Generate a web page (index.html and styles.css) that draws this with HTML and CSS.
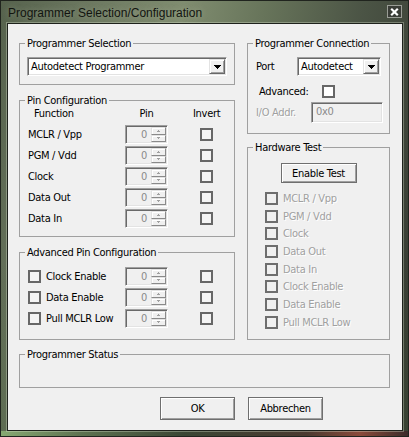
FILE: index.html
```html
<!DOCTYPE html>
<html>
<head>
<meta charset="utf-8">
<title>Programmer Selection/Configuration</title>
<link rel="stylesheet" href="styles.css">
</head>
<body>
<div class="window">
  <div class="titlebar">
    <span class="title">Programmer Selection/Configuration</span>
    <span class="close"><svg width="9" height="8" viewBox="0 0 9 8"><path d="M1.2 0.8L7.8 7.2M7.8 0.8L1.2 7.2" stroke="#fff" stroke-width="2.2"/></svg></span>
  </div>
  <div class="client">
    <div class="columns">
      <div class="col col-left">
        <fieldset class="group g-sel">
          <legend>Programmer Selection</legend>
          <div class="gbody">
            <div class="combo combo-prog">
              <span class="combo-text">Autodetect Programmer</span>
              <span class="combo-btn"><svg width="7" height="4" viewBox="0 0 7 4"><path d="M0 0h7v1h-1v1h-1v1h-1v1h-1v-1h-1v-1h-1v-1h-1z" fill="#000"/></svg></span>
            </div>
          </div>
        </fieldset>

        <fieldset class="group g-pins">
          <legend>Pin Configuration</legend>
          <div class="gbody">
            <div class="pin-head">
              <span class="h-func">Function</span>
              <span class="h-pin">Pin</span>
              <span class="h-inv">Invert</span>
            </div>
            <div class="pin-rows">
              <div class="pin-row">
                <span class="pin-label">MCLR / Vpp</span>
                <div class="spin"><span class="spin-val">0</span><span class="spin-btns"><span class="spin-b"><svg width="3" height="2" viewBox="0 0 3 2"><path d="M1 0h1v1h1v1h-3v-1h1z" fill="#a0a0a0"/></svg></span><span class="spin-b"><svg width="3" height="2" viewBox="0 0 3 2"><path d="M0 0h3v1h-1v1h-1v-1h-1z" fill="#a0a0a0"/></svg></span></span></div>
                <span class="chk chk-inv"></span>
              </div>
              <div class="pin-row">
                <span class="pin-label">PGM / Vdd</span>
                <div class="spin"><span class="spin-val">0</span><span class="spin-btns"><span class="spin-b"><svg width="3" height="2" viewBox="0 0 3 2"><path d="M1 0h1v1h1v1h-3v-1h1z" fill="#a0a0a0"/></svg></span><span class="spin-b"><svg width="3" height="2" viewBox="0 0 3 2"><path d="M0 0h3v1h-1v1h-1v-1h-1z" fill="#a0a0a0"/></svg></span></span></div>
                <span class="chk chk-inv"></span>
              </div>
              <div class="pin-row">
                <span class="pin-label">Clock</span>
                <div class="spin"><span class="spin-val">0</span><span class="spin-btns"><span class="spin-b"><svg width="3" height="2" viewBox="0 0 3 2"><path d="M1 0h1v1h1v1h-3v-1h1z" fill="#a0a0a0"/></svg></span><span class="spin-b"><svg width="3" height="2" viewBox="0 0 3 2"><path d="M0 0h3v1h-1v1h-1v-1h-1z" fill="#a0a0a0"/></svg></span></span></div>
                <span class="chk chk-inv"></span>
              </div>
              <div class="pin-row">
                <span class="pin-label">Data Out</span>
                <div class="spin"><span class="spin-val">0</span><span class="spin-btns"><span class="spin-b"><svg width="3" height="2" viewBox="0 0 3 2"><path d="M1 0h1v1h1v1h-3v-1h1z" fill="#a0a0a0"/></svg></span><span class="spin-b"><svg width="3" height="2" viewBox="0 0 3 2"><path d="M0 0h3v1h-1v1h-1v-1h-1z" fill="#a0a0a0"/></svg></span></span></div>
                <span class="chk chk-inv"></span>
              </div>
              <div class="pin-row">
                <span class="pin-label">Data In</span>
                <div class="spin"><span class="spin-val">0</span><span class="spin-btns"><span class="spin-b"><svg width="3" height="2" viewBox="0 0 3 2"><path d="M1 0h1v1h1v1h-3v-1h1z" fill="#a0a0a0"/></svg></span><span class="spin-b"><svg width="3" height="2" viewBox="0 0 3 2"><path d="M0 0h3v1h-1v1h-1v-1h-1z" fill="#a0a0a0"/></svg></span></span></div>
                <span class="chk chk-inv"></span>
              </div>
            </div>
          </div>
        </fieldset>

        <fieldset class="group g-adv">
          <legend>Advanced Pin Configuration</legend>
          <div class="gbody">
            <div class="adv-rows">
              <div class="pin-row">
                <span class="pin-label adv-label"><span class="chk"></span><span>Clock Enable</span></span>
                <div class="spin"><span class="spin-val">0</span><span class="spin-btns"><span class="spin-b"><svg width="3" height="2" viewBox="0 0 3 2"><path d="M1 0h1v1h1v1h-3v-1h1z" fill="#a0a0a0"/></svg></span><span class="spin-b"><svg width="3" height="2" viewBox="0 0 3 2"><path d="M0 0h3v1h-1v1h-1v-1h-1z" fill="#a0a0a0"/></svg></span></span></div>
                <span class="chk chk-inv"></span>
              </div>
              <div class="pin-row">
                <span class="pin-label adv-label"><span class="chk"></span><span>Data Enable</span></span>
                <div class="spin"><span class="spin-val">0</span><span class="spin-btns"><span class="spin-b"><svg width="3" height="2" viewBox="0 0 3 2"><path d="M1 0h1v1h1v1h-3v-1h1z" fill="#a0a0a0"/></svg></span><span class="spin-b"><svg width="3" height="2" viewBox="0 0 3 2"><path d="M0 0h3v1h-1v1h-1v-1h-1z" fill="#a0a0a0"/></svg></span></span></div>
                <span class="chk chk-inv"></span>
              </div>
              <div class="pin-row">
                <span class="pin-label adv-label"><span class="chk"></span><span>Pull MCLR Low</span></span>
                <div class="spin"><span class="spin-val">0</span><span class="spin-btns"><span class="spin-b"><svg width="3" height="2" viewBox="0 0 3 2"><path d="M1 0h1v1h1v1h-3v-1h1z" fill="#a0a0a0"/></svg></span><span class="spin-b"><svg width="3" height="2" viewBox="0 0 3 2"><path d="M0 0h3v1h-1v1h-1v-1h-1z" fill="#a0a0a0"/></svg></span></span></div>
                <span class="chk chk-inv"></span>
              </div>
            </div>
          </div>
        </fieldset>
      </div>

      <div class="col col-right">
        <fieldset class="group g-conn">
          <legend>Programmer Connection</legend>
          <div class="gbody">
            <div class="port-row">
              <span class="port-label">Port</span>
              <div class="combo combo-port">
                <span class="combo-text">Autodetect</span>
                <span class="combo-btn"><svg width="7" height="4" viewBox="0 0 7 4"><path d="M0 0h7v1h-1v1h-1v1h-1v1h-1v-1h-1v-1h-1v-1h-1z" fill="#000"/></svg></span>
              </div>
            </div>
            <div class="advd-row">
              <span class="advd-label">Advanced:</span>
              <span class="chk chk-white"></span>
            </div>
            <div class="io-row">
              <span class="io-label disabled">I/O Addr.</span>
              <div class="textbox"><span>0x0</span></div>
            </div>
          </div>
        </fieldset>

        <fieldset class="group g-hw">
          <legend>Hardware Test</legend>
          <div class="gbody">
            <div class="btn btn-test">Enable Test</div>
            <div class="hw-list">
              <div class="hw-row"><span class="chk chk-dis"></span><span class="disabled">MCLR / Vpp</span></div>
              <div class="hw-row"><span class="chk chk-dis"></span><span class="disabled">PGM / Vdd</span></div>
              <div class="hw-row"><span class="chk chk-dis"></span><span class="disabled">Clock</span></div>
              <div class="hw-row"><span class="chk chk-dis"></span><span class="disabled">Data Out</span></div>
              <div class="hw-row"><span class="chk chk-dis"></span><span class="disabled">Data In</span></div>
              <div class="hw-row"><span class="chk chk-dis"></span><span class="disabled">Clock Enable</span></div>
              <div class="hw-row"><span class="chk chk-dis"></span><span class="disabled">Data Enable</span></div>
              <div class="hw-row"><span class="chk chk-dis"></span><span class="disabled">Pull MCLR Low</span></div>
            </div>
          </div>
        </fieldset>
      </div>
    </div>

    <fieldset class="group g-status">
      <legend>Programmer Status</legend>
      <div class="gbody status-body"></div>
    </fieldset>

    <div class="buttons">
      <div class="btn">OK</div>
      <div class="btn">Abbrechen</div>
    </div>
  </div>
</div>
</body>
</html>
```

FILE: styles.css
```css
html, body {
  margin: 0;
  padding: 0;
}

body {
  width: 409px;
  height: 437px;
  overflow: hidden;
  font-family: "DejaVu Sans Condensed", "Liberation Sans", sans-serif;
  font-size: 11px;
  letter-spacing: -0.3px;
  color: #000;
}

.window {
  box-sizing: border-box;
  width: 409px;
  height: 437px;
  padding: 0 6px 6px 7px;
  display: flex;
  flex-direction: column;
  border: 0;
  background:
    linear-gradient(90deg, #87a972 0%, #5d7250 20%, #3a4634 45%, #4b3a30 75%, #8a4a3a 88%, #3a2b2a 100%) left bottom / 100% 6px no-repeat,
    linear-gradient(180deg, rgba(0,0,0,0) 60%, rgba(70,90,60,0.35) 100%),
    linear-gradient(100deg, #56624d 0%, #6e7a62 20%, #808d70 38%, #67745a 55%, #4b5445 75%, #33372f 100%);
  box-shadow: inset 0 0 0 1px #20241e;
}

.titlebar {
  height: 23px;
  display: flex;
  justify-content: space-between;
  align-items: flex-start;
}

.title {
  font-family: "Liberation Sans", sans-serif;
  font-size: 12px;
  letter-spacing: 0;
  line-height: 14px;
  margin-top: 6px;
  margin-left: 1px;
  color: #121410;
  text-shadow: 0 0 6px rgba(220, 230, 210, 0.35);
}

.close {
  box-sizing: border-box;
  width: 15px;
  height: 13px;
  margin-top: 5px;
  margin-right: 1px;
  border: 1px solid #9a9d96;
  background: #3a3d37;
  display: flex;
  align-items: center;
  justify-content: center;
}

.client {
  box-sizing: border-box;
  width: 396px;
  height: 408px;
  border: 1px solid #1e221c;
  box-shadow: 0 0 0 1px rgba(220, 230, 210, 0.35);
  background: #f0f0f0;
  padding: 13px 0 0 11px;
}

.columns {
  display: flex;
  gap: 12px;
  align-items: flex-start;
}

.col {
  display: flex;
  flex-direction: column;
}

.col-left { width: 216px; }
.col-right { width: 143px; }

/* group boxes */
.group {
  margin: 0;
  padding: 0;
  min-width: 0;
  box-sizing: border-box;
  border: 1px solid #a0a0a0;
}

.group legend {
  margin-left: 5px;
  padding: 0 2px;
  height: 13px;
  line-height: 13px;
}

.g-pins { margin-top: 9px; }
.g-adv { margin-top: 9px; }
.g-hw { margin-top: 7px; }
.g-status { margin-top: 8px; width: 371px; }

.g-sel .gbody { padding: 7px 7px 8px 7px; }
.g-pins .gbody { padding: 0 0 8px 8px; }
.g-adv .gbody { padding: 8px 0 11px 8px; }
.g-conn .gbody { padding: 7px 0 10px 8px; }
.g-hw .gbody { padding: 9px 0 10px 0; }
.status-body { height: 26px; }

/* combo box */
.combo {
  box-sizing: border-box;
  height: 19px;
  display: flex;
  align-items: stretch;
  background: #fff;
  border: 1px solid;
  border-color: #a0a0a0 #fff #fff #a0a0a0;
  box-shadow: inset 1px 1px 0 #696969, inset -1px -1px 0 #e3e3e3;
  padding: 1px;
}

.combo-text {
  flex: 1;
  padding-left: 2px;
  line-height: 15px;
  white-space: nowrap;
  overflow: hidden;
}

.combo-btn {
  box-sizing: border-box;
  width: 16px;
  background: #f0f0f0;
  border: 1px solid;
  border-color: #e3e3e3 #696969 #696969 #e3e3e3;
  box-shadow: inset 1px 1px 0 #fff, inset -1px -1px 0 #a0a0a0;
  display: flex;
  align-items: center;
  justify-content: center;
  padding-top: 1px;
}

.combo-port { width: 84px; }

/* pin table */
.pin-head {
  display: flex;
  height: 13px;
  line-height: 13px;
}

.h-func {
  box-sizing: border-box;
  width: 97px;
  padding-left: 6px;
}

.h-pin {
  width: 43px;
  text-align: center;
}

.h-inv {
  margin-left: 25px;
}

.pin-rows {
  margin-top: 5px;
  display: flex;
  flex-direction: column;
  gap: 2px;
}

.adv-rows {
  display: flex;
  flex-direction: column;
  gap: 2px;
}

.pin-row {
  display: flex;
  align-items: center;
  height: 19px;
}

.pin-label {
  width: 97px;
  white-space: nowrap;
}

.adv-label {
  display: flex;
  align-items: center;
  gap: 5px;
}

/* spinner */
.spin {
  box-sizing: border-box;
  width: 43px;
  height: 19px;
  display: flex;
  background: #f0f0f0;
  border: 1px solid;
  border-color: #a0a0a0 #fff #fff #a0a0a0;
  box-shadow: inset 1px 1px 0 #696969, inset -1px -1px 0 #e3e3e3;
  padding: 1px;
}

.spin-val {
  flex: 1;
  text-align: right;
  padding-right: 4px;
  line-height: 15px;
  color: #8a8a8a;
}

.spin-btns {
  width: 15px;
  display: flex;
  flex-direction: column;
}

.spin-b {
  box-sizing: border-box;
  flex: 1;
  background: #f0f0f0;
  border: 1px solid;
  border-color: #e3e3e3 #8a8a8a #8a8a8a #e3e3e3;
  box-shadow: inset 1px 1px 0 #fff;
  display: flex;
  align-items: center;
  justify-content: center;
}

/* checkboxes */
.chk {
  box-sizing: border-box;
  display: block;
  flex: none;
  width: 13px;
  height: 13px;
  border: 2px solid #676767;
  background: #f4f4f4;
}

.chk-inv { margin-left: 32px; }
.chk-white { background: #fff; }
.chk-dis { background: #f0f0f0; border-color: #6e6e6e; }

/* right column */
.port-row {
  display: flex;
  align-items: center;
}

.port-label { width: 41px; }

.advd-row {
  margin-top: 9px;
  height: 13px;
  display: flex;
  align-items: center;
  padding-left: 3px;
}

.advd-label { width: 63px; }

.io-row {
  margin-top: 4px;
  height: 21px;
  display: flex;
  align-items: center;
}

.io-label { width: 55px; }

.textbox {
  box-sizing: border-box;
  width: 72px;
  height: 21px;
  background: #f0f0f0;
  border: 1px solid;
  border-color: #a0a0a0 #fff #fff #a0a0a0;
  box-shadow: inset 1px 1px 0 #696969, inset -1px -1px 0 #e3e3e3;
  padding: 1px 0 0 4px;
  line-height: 15px;
  color: #8a8a8a;
}

.disabled {
  color: #a0a0a0;
  text-shadow: 1px 1px 0 #fff;
}

/* buttons */
.btn {
  box-sizing: border-box;
  width: 75px;
  height: 23px;
  border: 1px solid #6f6f6f;
  background: #f0f0f0;
  box-shadow: inset 1px 1px 0 #fff, inset -1px -1px 0 #a0a0a0;
  display: flex;
  align-items: center;
  justify-content: center;
  white-space: nowrap;
}

.btn-test {
  width: 76px;
  height: 20px;
  margin: 0 auto;
}

.hw-list {
  margin-top: 9px;
  padding-left: 17px;
  display: flex;
  flex-direction: column;
  gap: 4.7px;
}

.hw-row {
  height: 13px;
  display: flex;
  align-items: center;
  gap: 5px;
  white-space: nowrap;
}

.buttons {
  display: flex;
  gap: 13px;
  margin-top: 9px;
  padding-left: 141px;
}
```
